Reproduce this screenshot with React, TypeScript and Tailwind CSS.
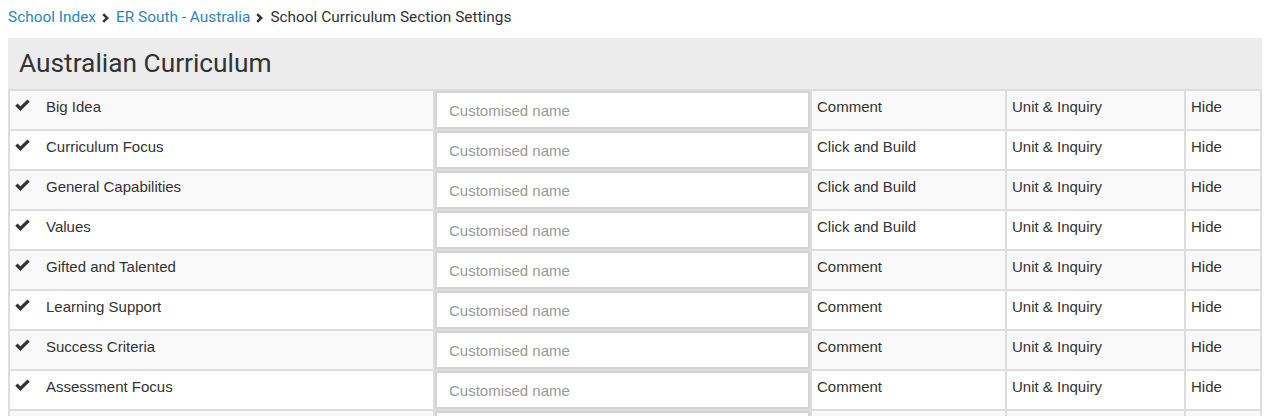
import React from "react";

const rows: [string, string][] = [
  ["Big Idea", "Comment"],
  ["Curriculum Focus", "Click and Build"],
  ["General Capabilities", "Click and Build"],
  ["Values", "Click and Build"],
  ["Gifted and Talented", "Comment"],
  ["Learning Support", "Comment"],
  ["Success Criteria", "Comment"],
  ["Assessment Focus", "Comment"],
  ["", ""],
];

function Chevron() {
  return (
    <svg width="7" height="10" viewBox="0 0 7 10" className="ml-[6px] mr-[7px] shrink-0">
      <path d="M1.2 1.2 L5.2 5 L1.2 8.8" fill="none" stroke="#333" strokeWidth="2.5" />
    </svg>
  );
}

function Check() {
  return (
    <svg width="15" height="11" viewBox="0 0 15 11" className="shrink-0 overflow-visible">
      <path d="M1.4 4.6 L5.4 8.6 L13.6 0.6" fill="none" stroke="#333" strokeWidth="3.3" />
    </svg>
  );
}

export default function App() {
  return (
    <div
      className="bg-white w-[1270px] h-[416px] overflow-hidden text-[#333]"
      style={{ fontFamily: "Roboto, 'Liberation Sans', sans-serif" }}
    >
      <div className="flex items-center h-[34px] pl-[8px] text-[15.4px] pt-[1px]">
        <span className="text-[#2a87b8]">School Index</span>
        <Chevron />
        <span className="text-[#2a87b8]">ER South - Australia</span>
        <Chevron />
        <span className="text-[#333]">School Curriculum Section Settings</span>
      </div>
      <div className="ml-[8px] w-[1254px] mt-[4px]">
        <div className="bg-[#ececec] h-[51px] flex items-center pl-[11px] text-[26.3px] text-[#333]">
          Australian Curriculum
        </div>
        <div
          className="bg-[#dddddd] p-[2px] pb-0 flex flex-col gap-[2px]"
          style={{ fontFamily: "'Liberation Sans', Arial, sans-serif" }}
        >
          {rows.map(([name, type], i) => {
            const bg = i % 2 === 0 ? "bg-[#f9f9f9]" : "bg-white";
            return (
              <div
                key={i}
                className="grid grid-cols-[423px_375px_193px_177px_74px] gap-[2px] h-[38px] text-[15px] leading-[21px]"
              >
                <div className={`${bg} flex items-start pl-[5px] pt-[5px]`}>
                  {name && (
                    <>
                      <div className="pt-[4px]">
                        <Check />
                      </div>
                      <span className="ml-[16px]">{name}</span>
                    </>
                  )}
                </div>
                <div className="bg-white">
                  <input
                    className="w-full h-full border-2 border-[#d4d4d4] bg-white px-[12px] text-[15px] text-[#555] placeholder:text-[#999] outline-none"
                    placeholder={name ? "Customised name" : ""}
                    style={{ fontFamily: "'Liberation Sans', Arial, sans-serif" }}
                  />
                </div>
                <div className={`${bg} pl-[5px] pt-[5px]`}>{type}</div>
                <div className={`${bg} pl-[5px] pt-[5px]`}>{name ? "Unit & Inquiry" : ""}</div>
                <div className={`${bg} pl-[5px] pt-[5px]`}>{name ? "Hide" : ""}</div>
              </div>
            );
          })}
        </div>
      </div>
    </div>
  );
}
